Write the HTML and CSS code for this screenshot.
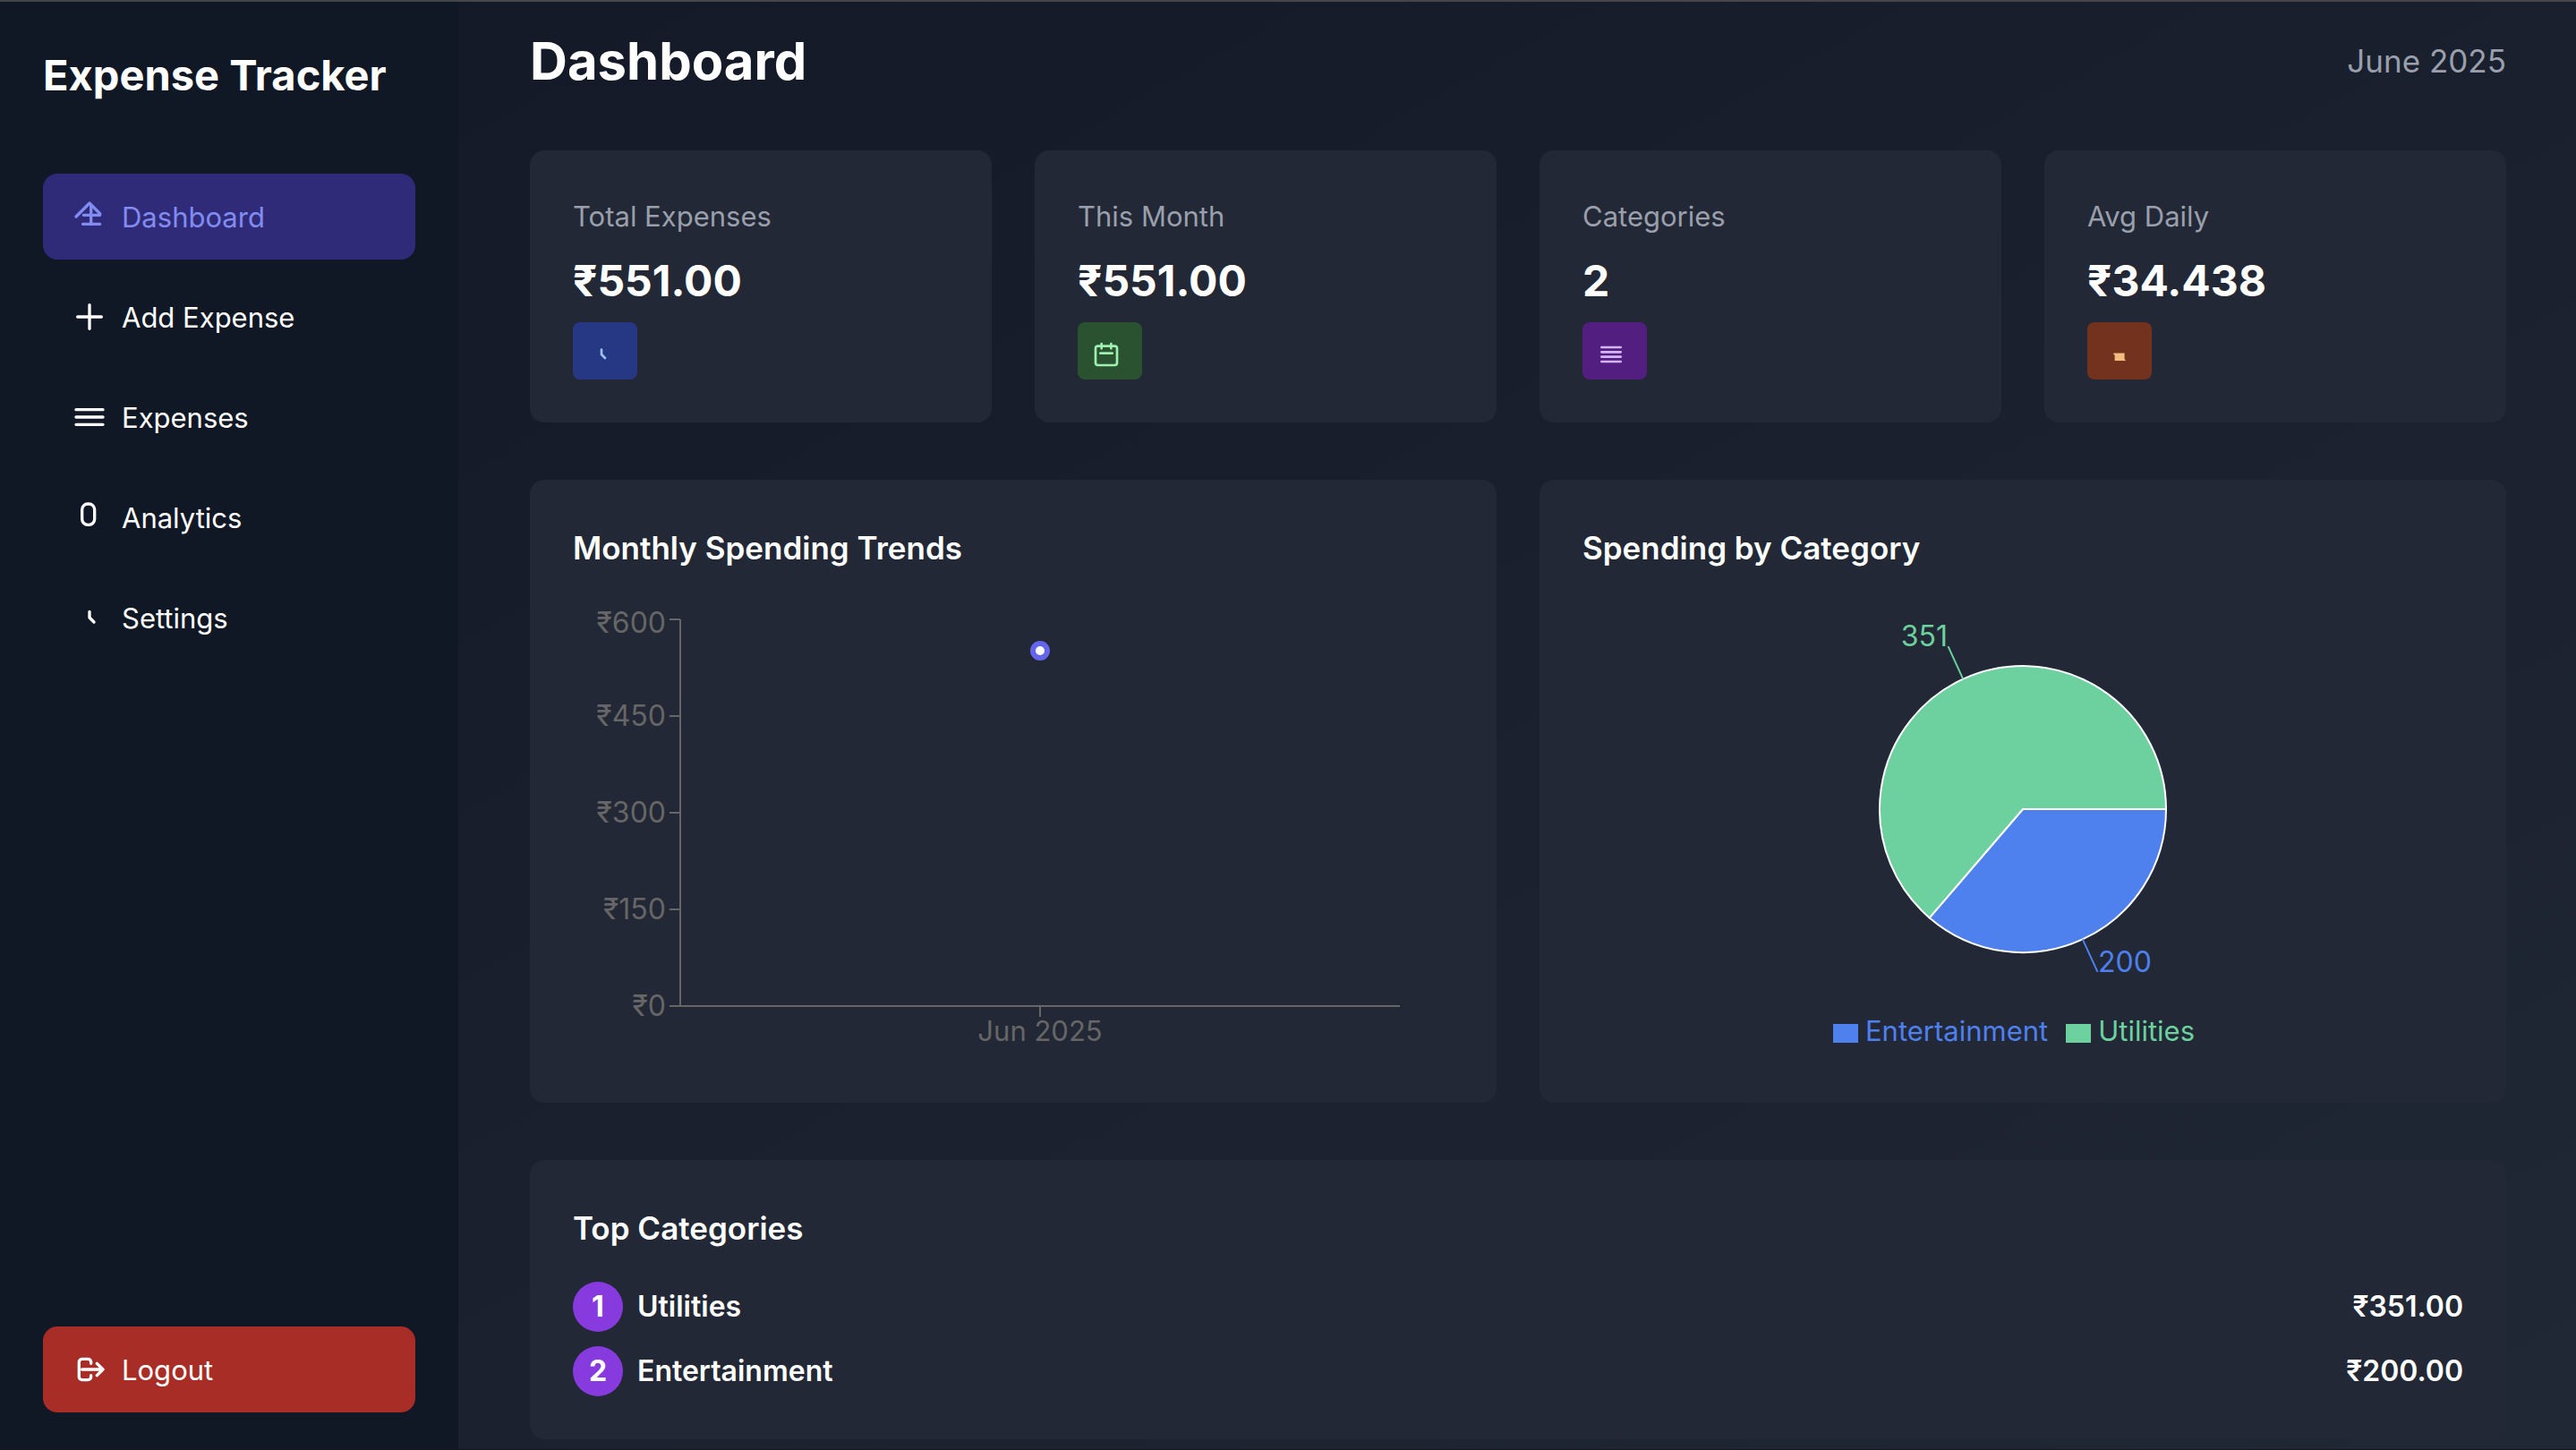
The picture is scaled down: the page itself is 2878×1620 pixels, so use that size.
FILE: index.html
```html
<!DOCTYPE html>
<html lang="en">
<head>
  <meta charset="utf-8">
  <meta name="viewport" content="width=device-width, initial-scale=1">
  <title>Expense Tracker</title>
  <link rel="stylesheet" href="styles.css">
</head>
<body>
  <div class="app">
    <aside class="sidebar">
      <p class="brand">Expense Tracker</p>
      <nav class="nav">
        <a class="nav-item active" href="#dashboard" aria-current="page">
          <svg class="icon" viewBox="0 0 24 24" aria-hidden="true"><path d="M3 12l9-9 7 7v1H8M13 4v13M7.500 17H19"/></svg>
          <span class="nav-label">Dashboard</span>
        </a>
        <a class="nav-item" href="#add">
          <svg class="icon" viewBox="0 0 24 24" aria-hidden="true"><path d="M12 4v16M4 12h16"/></svg>
          <span class="nav-label">Add Expense</span>
        </a>
        <a class="nav-item" href="#expenses">
          <svg class="icon" viewBox="0 0 24 24" aria-hidden="true"><path d="M3 7h18M3 12h18M3 17h18"/></svg>
          <span class="nav-label">Expenses</span>
        </a>
        <a class="nav-item" href="#analytics">
          <svg class="icon" viewBox="0 0 24 24" aria-hidden="true"><rect x="7" y="3" width="8.400" height="14" rx="3.800"/></svg>
          <span class="nav-label">Analytics</span>
        </a>
        <a class="nav-item" href="#settings">
          <svg class="icon" viewBox="0 0 24 24" aria-hidden="true"><path d="M12 8v4l3 3"/></svg>
          <span class="nav-label">Settings</span>
        </a>
      </nav>
      <button class="nav-item logout" type="button">
        <svg class="icon" viewBox="0 0 24 24" aria-hidden="true"><path d="M17 8l4 4-4 4M21 12H7M13 8V7a2 2 0 0 0-2-2H7a2 2 0 0 0-2 2v10a2 2 0 0 0 2 2h4a2 2 0 0 0 2-2v-1"/></svg>
        <span class="nav-label">Logout</span>
      </button>
    </aside>

    <main class="main">
      <header class="page-header">
        <h1 class="page-title">Dashboard</h1>
        <span class="period">June 2025</span>
      </header>

      <section class="stats">
        <article class="card">
          <p class="stat-label">Total Expenses</p>
          <p class="stat-value">₹551.00</p>
          <span class="stat-icon blue"><svg class="icon small" viewBox="0 0 24 24" aria-hidden="true"><path d="M12 8v4l3 3"/></svg></span>
        </article>
        <article class="card">
          <p class="stat-label">This Month</p>
          <p class="stat-value">₹551.00</p>
          <span class="stat-icon green"><svg class="icon small" viewBox="0 0 24 24" aria-hidden="true"><path d="M8 7V3M16 7V3M7 11h10M5 21h14a2 2 0 0 0 2-2V7a2 2 0 0 0-2-2H5a2 2 0 0 0-2 2v12a2 2 0 0 0 2 2z"/></svg></span>
        </article>
        <article class="card">
          <p class="stat-label">Categories</p>
          <p class="stat-value">2</p>
          <span class="stat-icon purple"><svg class="icon small" viewBox="0 0 24 24" aria-hidden="true"><path d="M4 6h16M4 10h16M4 14h16M4 18h16"/></svg></span>
        </article>
        <article class="card">
          <p class="stat-label">Avg Daily</p>
          <p class="stat-value">₹34.438</p>
          <span class="stat-icon orange"><svg class="icon small" viewBox="0 0 24 24" aria-hidden="true"><path class="solid" d="M10 10.800h9.200V16l.8.500v.700h-9V12.500l-1-.700z"/></svg></span>
        </article>
      </section>

      <section class="charts">
        <article class="card">
          <h2 class="card-title">Monthly Spending Trends</h2>
          <svg class="chart" viewBox="0 0 984 512" role="img" aria-label="Monthly spending trends">
            <path class="axis" d="M120 20V452H924M108 20h12M108 128h12M108 236h12M108 344h12M108 452h12M522 452v12"/>
            <g class="tick end">
              <text x="104" y="35">₹600</text>
              <text x="104" y="139">₹450</text>
              <text x="104" y="247">₹300</text>
              <text x="104" y="355">₹150</text>
              <text x="104" y="463">₹0</text>
            </g>
            <text class="tick month middle" x="522" y="491">Jun 2025</text>
            <circle class="dot" cx="522" cy="55" r="8"/>
          </svg>
        </article>
        <article class="card">
          <h2 class="card-title">Spending by Category</h2>
          <svg class="chart" viewBox="0 0 984 456" role="img" aria-label="Spending by category">
            <path class="slice fill-blue" d="M492 232H652A160 160 0 0 1 387.700 353.400z"/>
            <path class="slice fill-green" d="M492 232L387.700 353.400A160 160 0 1 1 652 232z"/>
            <path class="line-blue" d="M558.800 377.400L575.500 413.800"/>
            <path class="line-green" d="M425.200 86.600L408.500 50.200"/>
            <text class="fill-blue" x="576" y="414">200</text>
            <text class="fill-green end" x="408" y="50">351</text>
          </svg>
          <ul class="legend">
            <li class="legend-item text-blue"><span class="swatch"></span>Entertainment</li>
            <li class="legend-item text-green"><span class="swatch"></span>Utilities</li>
          </ul>
        </article>
      </section>

      <section class="card">
        <h2 class="card-title">Top Categories</h2>
        <ol class="ranking">
          <li class="rank"><span class="badge">1</span><span>Utilities</span><span class="amount">₹351.00</span></li>
          <li class="rank"><span class="badge">2</span><span>Entertainment</span><span class="amount">₹200.00</span></li>
        </ol>
      </section>
    </main>
  </div>
</body>
</html>
```
FILE: styles.css
```css
*,
*::before,
*::after {
  box-sizing: border-box;
}

body,
h1,
h2,
p,
ul,
ol {
  margin: 0;
  padding: 0;
}

ul,
ol {
  list-style: none;
}

body {
  color: #fff;
  background: #181e2b;
  font: 400 32px/48px Inter, "Noto Sans", sans-serif;
}

.app {
  display: flex;
  min-height: 100vh;
  border-top: 2px solid #444649;
  border-bottom: 1px solid #111622;
  background: linear-gradient(to bottom right, #121826, #212835);
}

.sidebar {
  display: flex;
  flex-direction: column;
  flex: 0 0 512px;
  padding: 48px 48px 41px;
  background: #111825;
}

.brand {
  padding-top: 2px;
  margin-bottom: 78px;
  font-size: 47px;
  font-weight: 700;
  line-height: 64px;
}

.nav {
  display: flex;
  flex-direction: column;
  gap: 16px;
}

.nav-item {
  display: flex;
  align-items: center;
  gap: 16px;
  padding: 23px 32px;
  border: 0;
  border-radius: 16px;
  color: #fff;
  background: none;
  font: inherit;
  font-size: 31px;
  text-align: left;
  text-decoration: none;
}

.nav-item.active {
  color: #828cf0;
  background: #302b79;
}

.nav-item.logout {
  margin-top: auto;
  background: #a92d27;
}

.nav-label {
  padding-top: 2px;
}

.icon {
  display: block;
  width: 40px;
  height: 40px;
  fill: none;
  stroke: currentColor;
  stroke-width: 2;
  stroke-linecap: round;
  stroke-linejoin: round;
}

.icon.small {
  width: 32px;
  height: 32px;
}

.icon .solid {
  fill: currentColor;
  stroke: none;
}

.main {
  flex: 1;
  min-width: 0;
  padding: 30px 78px 11px 80px;
}

.page-header {
  display: flex;
  align-items: center;
  justify-content: space-between;
  margin-bottom: 64px;
}

.page-title {
  font-size: 58px;
  font-weight: 700;
  line-height: 72px;
}

.period {
  color: #9a9fac;
  font-size: 35px;
}

.card {
  padding: 48px;
  border-radius: 16px;
  background: #222835;
}

.stats {
  display: grid;
  grid-template-columns: repeat(4, 1fr);
  gap: 48px;
  margin-bottom: 64px;
}

.stat-label {
  padding-top: 2px;
  margin-bottom: 16px;
  color: #9a9fac;
  font-size: 31px;
}

.stat-value {
  margin-bottom: 14px;
  font-size: 48px;
  font-weight: 700;
  line-height: 64px;
}

.stat-icon {
  display: block;
  width: 72px;
  height: 64px;
  padding: 20px 16px 12px;
  border-radius: 8px;
}

.blue {
  color: #9bc3f8;
  background: #263884;
}

.green {
  color: #9fefb0;
  background: #2a5231;
}

.purple {
  color: #d4b5fa;
  background: #521f81;
}

.orange {
  color: #f4bc7e;
  background: #73321d;
}

.charts {
  display: grid;
  grid-template-columns: repeat(2, 1fr);
  gap: 48px;
  margin-bottom: 64px;
}

.card-title {
  margin-bottom: 32px;
  font-size: 35px;
  font-weight: 600;
  line-height: 56px;
}

.chart {
  display: block;
  width: 100%;
  font-size: 32px;
}

.axis {
  fill: none;
  stroke: #666;
  stroke-width: 2;
}

.tick {
  fill: #666;
}

.month {
  font-size: 31px;
}

.end {
  text-anchor: end;
}

.middle {
  text-anchor: middle;
}

.dot {
  fill: #fff;
  stroke: #6467eb;
  stroke-width: 6;
}

.slice {
  stroke: #fff;
  stroke-width: 2;
}

.fill-blue {
  fill: #4e80ee;
}

.fill-green {
  fill: #6cd19f;
}

.line-blue {
  stroke: #4e80ee;
  stroke-width: 2;
}

.line-green {
  stroke: #6cd19f;
  stroke-width: 2;
}

.legend {
  display: flex;
  justify-content: center;
  gap: 20px;
  padding-right: 20px;
  font-size: 31px;
}

.legend-item {
  display: flex;
  align-items: center;
  gap: 8px;
}

.text-blue {
  color: #4e80ee;
}

.text-green {
  color: #6cd19f;
}

.swatch {
  width: 28px;
  height: 21px;
  margin-top: 4px;
  background: currentColor;
}

.ranking {
  display: flex;
  flex-direction: column;
  gap: 16px;
}

.rank {
  display: flex;
  align-items: center;
  gap: 16px;
  font-weight: 600;
}

.badge {
  width: 56px;
  border-radius: 28px;
  background: #873ade;
  font-weight: 700;
  line-height: 56px;
  text-align: center;
}

.amount {
  margin-left: auto;
}
```
